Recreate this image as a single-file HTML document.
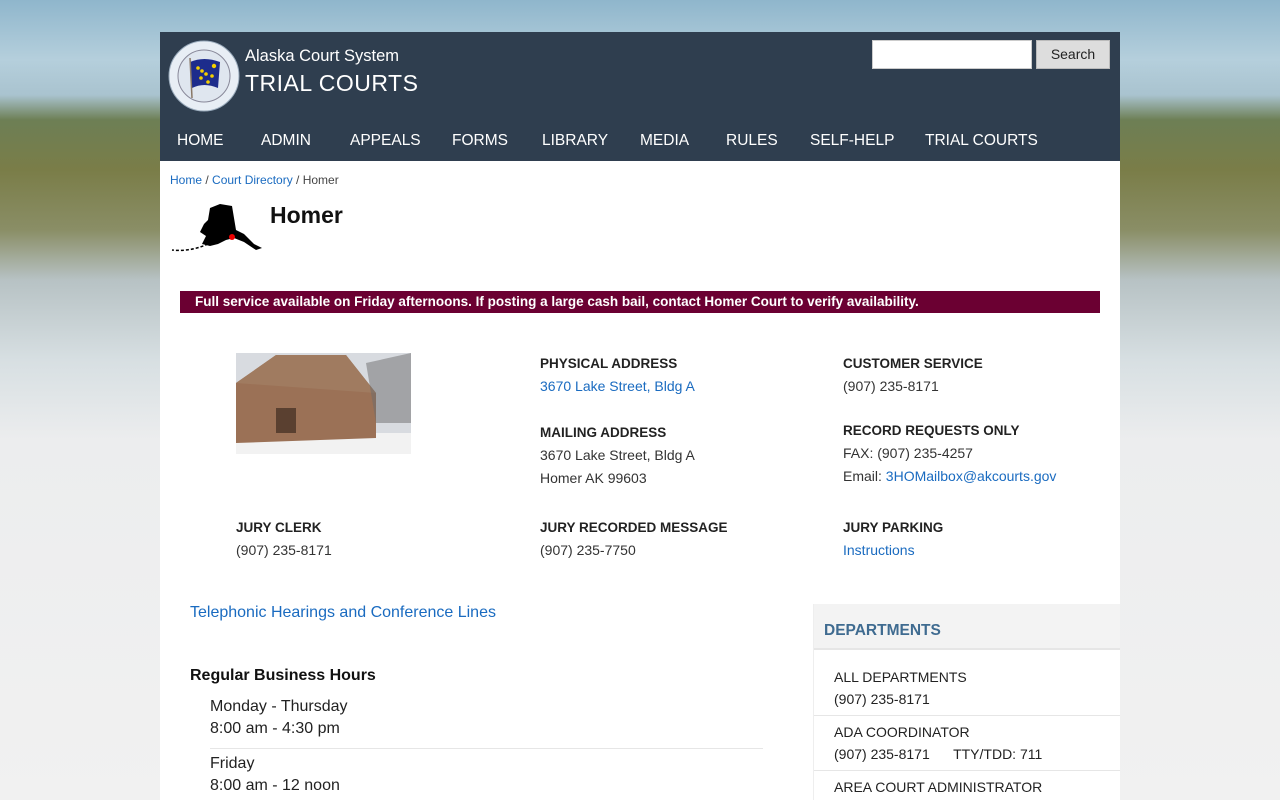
<!DOCTYPE html>
<html style="overflow:hidden;height:800px;background:#f1f1f1"><head><meta charset="utf-8"><style>
*{box-sizing:border-box;margin:0;padding:0}
html,body{width:1280px;height:800px;overflow:hidden}
body{font-family:"Liberation Sans",sans-serif;color:#222;
background:linear-gradient(180deg,#8fb6cc 0px,#b5cfdc 60px,#a9c3cf 95px,#6d7f55 120px,#7a7d48 170px,#8a8e66 230px,#b7c2c4 280px,#d7dfe2 360px,#ecedee 440px,#f1f1f1 800px) no-repeat;background-size:1280px 800px;position:relative}
a{color:#1a6bc0;text-decoration:none}
#wrap{position:absolute;left:160px;top:32px;width:960px;height:768px;background:#fff;overflow:hidden}
#hdr{height:129px;background:#2f3e4f;position:relative}
#seal{position:absolute;left:8px;top:8px;width:72px;height:72px}
#t1{position:absolute;left:85px;top:15px;color:#fff;font-size:16.5px}
#t2{position:absolute;left:85px;top:38px;color:#fff;font-size:23px;letter-spacing:.5px}
#sbox{position:absolute;left:712px;top:8px;width:160px;height:29px;background:#fff;border:1px solid #ccc}
#sbtn{position:absolute;left:876px;top:8px;width:74px;height:29px;background:#ddd;border:1px solid #bbb;font-size:14px;text-align:center;line-height:27px;color:#222}
#nav{position:absolute;left:0;top:100px;font-size:15.5px;color:#fff}
#nav span{position:absolute;top:0;white-space:nowrap}
.bc{position:absolute;left:10px;top:141px;font-size:12px;color:#444}
h1{position:absolute;left:110px;top:170px;font-size:23px;font-weight:bold;color:#111}
#alert{position:absolute;left:20px;top:259px;width:920px;height:22px;background:#6b0032;color:#fff;font-size:13.5px;padding-left:15px;line-height:22px;font-weight:bold;white-space:nowrap}
.blk{position:absolute;font-size:14px;line-height:23px;color:#333}
.blk b{color:#222;font-size:13.5px}
#dep{position:absolute;left:653px;top:572px;width:307px;height:228px;background:#fff;border-left:1px solid #eee}
#dephd{height:46px;background:#f3f3f3;border-bottom:2px solid #e6e6e6;color:#3f6b90;font-weight:bold;font-size:15.5px;padding:18px 0 0 10px}
.di{padding:0 0 0 20px;font-size:14px;line-height:22px;border-bottom:1px solid #e6e6e6;color:#222}
</style></head><body>
<div id="wrap">
 <div id="hdr">
  <svg id="seal" viewBox="0 0 72 72"><circle cx="36" cy="36" r="35" fill="#e8eef5" stroke="#9ab" /><circle cx="36" cy="36" r="26" fill="#dfe6ef" stroke="#889"/><path d="M22 22 Q36 16 52 22 L50 48 Q36 42 24 48 Z" fill="#1d2c8c"/><g fill="#f5d000"><circle cx="30" cy="28" r="1.8"/><circle cx="34" cy="31" r="1.8"/><circle cx="38" cy="34" r="1.8"/><circle cx="46" cy="26" r="2.2"/><circle cx="44" cy="36" r="1.8"/><circle cx="33" cy="38" r="1.8"/><circle cx="40" cy="42" r="1.8"/></g><line x1="22" y1="18" x2="24" y2="58" stroke="#876" stroke-width="1.5"/></svg>
  <div id="t1">Alaska Court System</div>
  <div id="t2">TRIAL COURTS</div>
  <div id="sbox"></div><div id="sbtn">Search</div>
  <div id="nav" style="top:100px"><span style="left:17px">HOME</span><span style="left:101px">ADMIN</span><span style="left:190px">APPEALS</span><span style="left:292px">FORMS</span><span style="left:382px">LIBRARY</span><span style="left:480px">MEDIA</span><span style="left:566px">RULES</span><span style="left:650px">SELF-HELP</span><span style="left:765px">TRIAL COURTS</span></div>
 </div>
 <div class="bc"><a>Home</a> / <a>Court Directory</a> / Homer</div>
 <svg style="position:absolute;left:10px;top:168px" width="98" height="56" viewBox="0 0 98 56"><path d="M40 8 L50 4 L62 6 L66 30 L74 34 L84 44 L92 48 L86 50 L74 42 L64 38 L56 40 L48 44 L40 46 L32 44 L36 36 L30 32 L34 24 L38 20 Z" fill="#000"/><path d="M38 44 Q20 52 2 50" stroke="#000" stroke-width="1.5" fill="none" stroke-dasharray="3 2"/><circle cx="62" cy="37" r="3" fill="#e00"/></svg>
 <h1>Homer</h1>
 <div id="alert">Full service available on Friday afternoons. If posting a large cash bail, contact Homer Court to verify availability.</div>
 <svg style="position:absolute;left:76px;top:321px" width="175" height="101" viewBox="0 0 175 101"><rect width="175" height="101" fill="#d8dbe0"/><rect y="80" width="175" height="21" fill="#f2f2f2"/><path d="M0 30 L40 2 L110 2 L140 40 L140 85 L0 90 Z" fill="#9b7156"/><path d="M0 30 L40 2 L110 2 L140 40 Z" fill="#a07b60"/><rect x="40" y="55" width="20" height="25" fill="#5a4030"/><path d="M130 10 L175 0 L175 70 L140 70 Z" fill="#6b6b6b" opacity=".5"/></svg>
 <div class="blk" style="left:380px;top:320px"><b>PHYSICAL ADDRESS</b><br><a>3670 Lake Street, Bldg A</a><br><br><b>MAILING ADDRESS</b><br>3670 Lake Street, Bldg A<br>Homer AK 99603</div>
 <div class="blk" style="left:683px;top:320px"><b>CUSTOMER SERVICE</b><br>(907) 235-8171<br><div style="height:21px"></div><b>RECORD REQUESTS ONLY</b><br>FAX: (907) 235-4257<br>Email: <a>3HOMailbox@akcourts.gov</a></div>
 <div class="blk" style="left:76px;top:484px"><b>JURY CLERK</b><br>(907) 235-8171</div>
 <div class="blk" style="left:380px;top:484px"><b>JURY RECORDED MESSAGE</b><br>(907) 235-7750</div>
 <div class="blk" style="left:683px;top:484px"><b>JURY PARKING</b><br><a>Instructions</a></div>
 <a style="position:absolute;left:30px;top:572px;font-size:16px">Telephonic Hearings and Conference Lines</a>
 <div style="position:absolute;left:30px;top:635px;font-size:16px;font-weight:bold;color:#111">Regular Business Hours</div>
 <div style="position:absolute;left:50px;top:664px;font-size:16px;line-height:22px;color:#222">Monday - Thursday<br>8:00 am - 4:30 pm</div>
 <div style="position:absolute;left:50px;top:716px;width:553px;border-top:1px solid #e6e6e6"></div>
 <div style="position:absolute;left:50px;top:721px;font-size:16px;line-height:22px;color:#222">Friday<br>8:00 am - 12 noon</div>
 <div id="dep"><div id="dephd">DEPARTMENTS</div>
  <div class="di" style="padding-top:16px;padding-bottom:5px">ALL DEPARTMENTS<br>(907) 235-8171</div>
  <div class="di" style="padding-top:5px;padding-bottom:5px">ADA COORDINATOR<br>(907) 235-8171 &nbsp; &nbsp; &nbsp;TTY/TDD: 711</div>
  <div class="di" style="padding-top:5px;border:0">AREA COURT ADMINISTRATOR</div>
 </div>
</div>
</body></html>
